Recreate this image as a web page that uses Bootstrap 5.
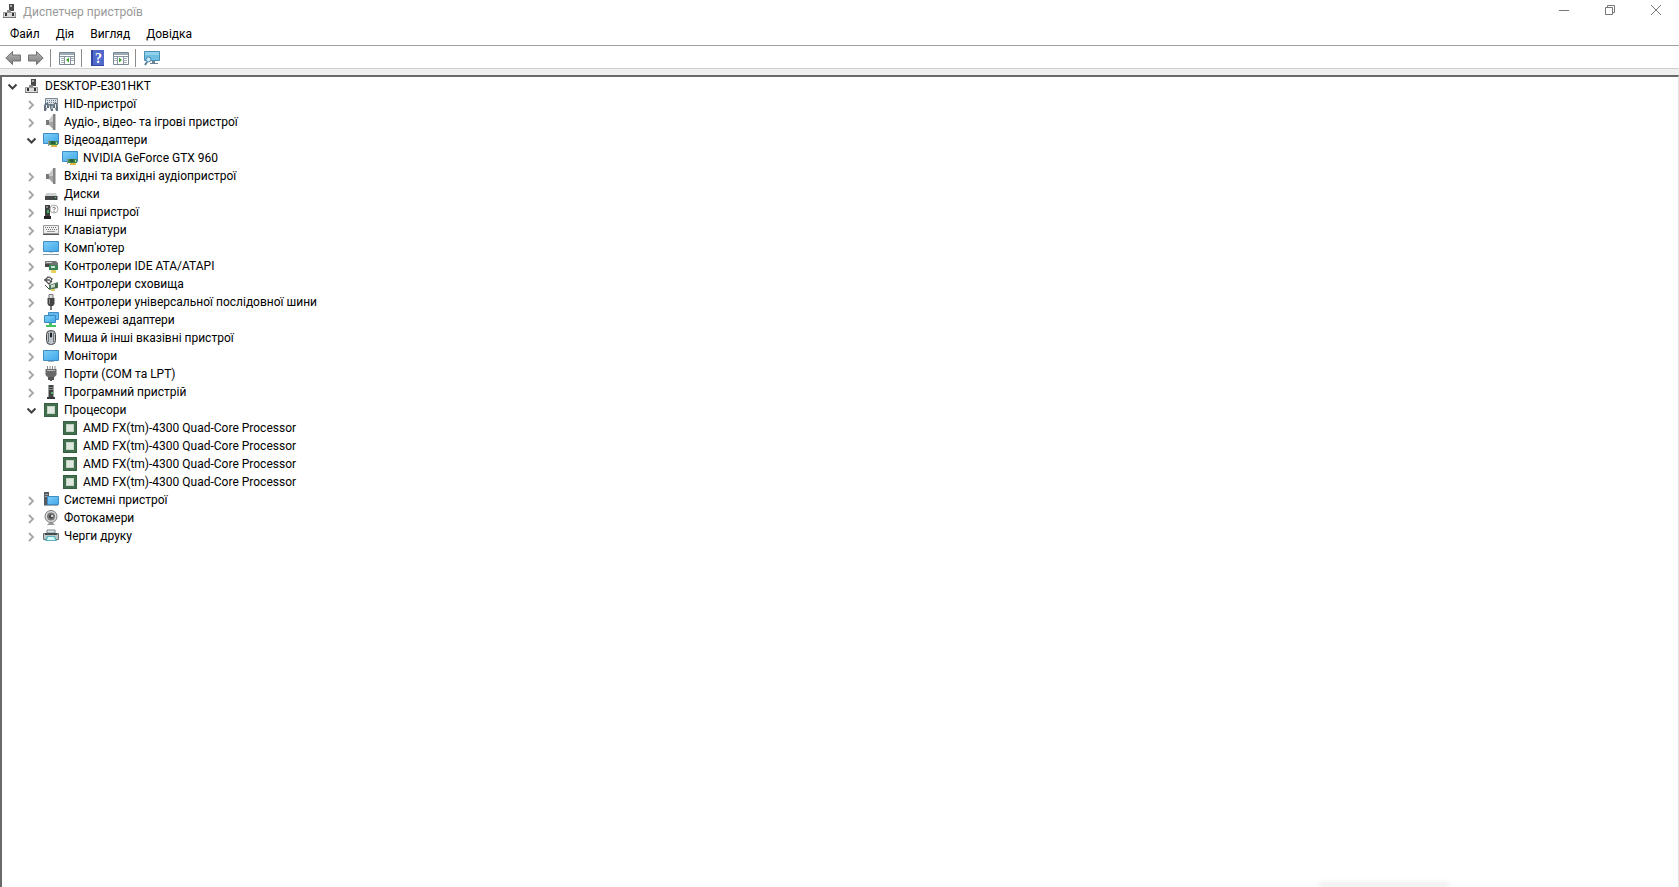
<!DOCTYPE html>
<html lang="uk">
<head>
<meta charset="utf-8">
<meta name="viewport" content="width=device-width, initial-scale=1">
<title>Диспетчер пристроїв</title>
<link href="https://cdn.jsdelivr.net/npm/bootstrap@5.3.0/dist/css/bootstrap.min.css" rel="stylesheet">
<style>
  body { font: 12px/18px Roboto, "Noto Sans", sans-serif; color: #000; background: #fff; }
  button { font: inherit; color: inherit; background: none; border: 0; padding: 0; }
  svg { display: block; flex: none; }
  .titlebar { height: 22px; padding-left: 2px; color: #999; }
  .titlebar h1 { font: inherit; margin: 2px 0 0 5px; }
  .win-btn { width: 46px; height: 20px; color: #777; }
  .menubar { height: 24px; padding: 1px 0 0 2px; border-bottom: 1px solid #a0a0a0; }
  .menubar button { padding: 0 8px; }
  .toolbar { height: 23px; padding: 2px 0 0 5px; border-bottom: 1px solid #cfcfcf; }
  .toolbar button + button { margin-left: 7px; }
  .tool-sep { width: 1px; height: 18px; margin: 0 8px 0 6px; background: #8c8c8c; }
  .band { height: 6px; background: #f0f0f0; }
  .pane { border: solid #696969; border-width: 2px 0 0 2px; border-right: 1px solid #e3e3e3; padding-left: 2px; }
  .tree ul { padding-left: 19px; }
  .node { height: 18px; white-space: nowrap; }
  .twist { width: 16px; height: 18px; margin-right: 4px; color: #a6a6a6; }
  .twist.open { color: #404040; }
  .node > svg { margin-right: 5px; }
  .peek { right: 230px; bottom: 0; width: 130px; height: 7px; background: linear-gradient(#fff0, #e6e6e6); filter: blur(2px); }
</style>
</head>
<body class="d-flex flex-column min-vh-100 overflow-hidden position-relative">

<svg width="0" height="0" class="position-absolute" aria-hidden="true">
  <defs>
    <linearGradient id="sky" x1="0" y1="0" x2="1" y2="1"><stop offset="0" stop-color="#7fd0f8"/><stop offset="1" stop-color="#3fa6ea"/></linearGradient>
    <linearGradient id="metal" x1="0" y1="0" x2="0" y2="1"><stop offset="0" stop-color="#b5b5b5"/><stop offset="1" stop-color="#7c7c7c"/></linearGradient>
    <symbol id="closed" viewBox="0 0 16 18"><path d="M6 6l4 4-4 4" fill="none" stroke="currentColor" stroke-width="1.800"/></symbol>
    <symbol id="opened" viewBox="0 0 16 18"><path d="M4.500 7.500l4 4 4-4" fill="none" stroke="currentColor" stroke-width="2"/></symbol>
    <symbol id="i-manager" viewBox="0 0 16 16">
      <path d="M7 1h5v7H7z" fill="#4a4a4a"/><path d="M8 2h2v2H8z" fill="#aaa"/><path d="M5 7h4v2H5z" fill="#888"/>
      <path d="M1.500 9.500h12v5h-12z" fill="#dadada" stroke="#999"/><path d="M3 10h2v3H3zM10 10h2v3h-2z" fill="#333"/><path d="M1 14h13v1H1z" fill="#777"/>
    </symbol>
    <symbol id="i-hid" viewBox="0 0 16 16">
      <path d="M2.500 2.500h12v6h-12z" fill="#dbe1e6" stroke="#7b8791"/><path d="M4 4.500h9M4 6.500h9" stroke="#6d7b86" stroke-dasharray="1 1"/>
      <path d="M1 15V10l1-3h3l1 3 1-2h2l1 2 1-3h3l1 3v5h-2l-1-3h-2v3H8l-1-3H4l-1 3z" fill="#63727e"/><path d="M3.500 9v3M12.500 8v4M9 10v3M6.500 10v2" stroke="#e4ecf1"/>
    </symbol>
    <symbol id="i-audio" viewBox="0 0 16 16">
      <path d="M3 6h3v5H3z" fill="#777"/><path d="M6 6l4-5v14l-4-4z" fill="#a5a5a5"/><path d="M10 0h2.500v16H10z" fill="#858585"/><path d="M6 6l4-5v7H6z" fill="#c9c9c9"/>
    </symbol>
    <symbol id="i-display" viewBox="0 0 16 16">
      <path d="M.5 1.500h15v10H.5z" fill="url(#sky)" stroke="#3f8dc4"/><path d="M6 9h9v4H6z" fill="#3f8a50"/><path d="M8 9h4v3H8z" fill="#2c6038"/><path d="M8 13h6v2H8z" fill="#dcb845"/><path d="M5 8h1v6H5z" fill="#999"/><path d="M13 10h1v2h-1z" fill="#b4dc9c"/>
    </symbol>
    <symbol id="i-disk" viewBox="0 0 16 16"><path d="M3 7h10l1 3H2z" fill="#d0d0d0"/><path d="M2 10h12.500v4H2z" fill="#454848"/><path d="M12 11h1v1h-1z" fill="#65d46e"/></symbol>
    <symbol id="i-other" viewBox="0 0 16 16">
      <path d="M2 1h5v12H2z" fill="#3b3f3d"/><path d="M3 2h2v2H3z" fill="#818784"/><path d="M4 6h2v3H4z" fill="#3fae58"/><path d="M1 12h7v3H1z" fill="#222"/>
      <circle cx="11" cy="5" r="4" fill="#fff" stroke="#aaa"/><path d="M9.500 4q1.500-2 3 0 0 1-1.500 1.500v1M11 7v1" fill="none" stroke="#777"/>
    </symbol>
    <symbol id="i-keyboard" viewBox="0 0 16 16"><path d="M.5 3.500h15v8H.5z" fill="#eee" stroke="#999"/><path d="M2 5.500h12M3 7.500h11" stroke="#777" stroke-dasharray="1 1"/><path d="M4 9.500h8" stroke="#999"/><path d="M0 12h16v1H0z" fill="#555"/></symbol>
    <symbol id="i-computer" viewBox="0 0 16 16"><path d="M.5 1.500h15v10H.5z" fill="url(#sky)" stroke="#3f8dc4"/><path d="M0 14.500h16" stroke="#8397a5"/><path d="M6 12h4v1H6z" fill="#ccd6dd"/></symbol>
    <symbol id="i-ide" viewBox="0 0 16 16"><path d="M2 3h11l2 2v3H2z" fill="#6f7474"/><path d="M2 6h5v3H2z" fill="#444"/><path d="M6 7h9v5H6z" fill="#3a8554"/><path d="M8 8h4v2H8z" fill="#d2e2d4"/><path d="M8 12h5v3H8z" fill="#e9d160"/><path d="M3 4h6v1H3z" fill="#c9d3ce"/></symbol>
    <symbol id="i-storage" viewBox="0 0 16 16"><path d="M8 2L5 1 2 4l4 4 3-3M1 4h6M6 1l3 2-2 3" fill="none" stroke="#555" stroke-width="1.300"/><path d="M6 9l9-3v6l-9 2z" fill="#4d7a57"/><path d="M8 9l4-1v3l-4 1z" fill="#cad8ca"/><path d="M2 9l4 4M13 8v4" stroke="#444"/><path d="M8 13h4v2H8z" fill="#e0c860"/></symbol>
    <symbol id="i-usb" viewBox="0 0 16 16"><path d="M6 .5h4v4H6z" fill="#ddd" stroke="#777"/><path d="M4.500 4h7v6l-1.500 2H6l-1.500-2z" fill="#444"/><path d="M7 12h2v4H7z" fill="#777"/><path d="M6 5h1v5H6z" fill="#8a8a8a"/></symbol>
    <symbol id="i-network" viewBox="0 0 16 16"><path d="M5.500.5h10v7h-10z" fill="#5fb8f0" stroke="#3f8dc4"/><path d="M1.500 3.500h11v7h-11z" fill="url(#sky)" stroke="#3a88c0"/><path d="M6 11h3v2h4v2H3v-2h3z" fill="#46c263"/></symbol>
    <symbol id="i-mouse" viewBox="0 0 16 16"><rect x="3.500" y=".5" width="9" height="14" rx="4" fill="#bcc3ca" stroke="#444"/><path d="M8 1v7M5.500 3v9M10.500 3v9" stroke="#6b737a"/><path d="M7 3h2v4H7z" fill="#222"/></symbol>
    <symbol id="i-monitor" viewBox="0 0 16 16"><path d="M.5 2.500h15v10H.5z" fill="url(#sky)" stroke="#3f8dc4"/><path d="M5 13h6v1H5z" fill="#a5b5c0"/></symbol>
    <symbol id="i-port" viewBox="0 0 16 16"><path d="M4.500 0v4M7 0v4M9.500 0v4M12 0v4" stroke="#888"/><path d="M2.500 3h11v6l-2 2h-7l-2-2z" fill="#686868"/><path d="M4 4h8v1H4z" fill="#bbb"/><path d="M5 11h2v3H5zM9 11h2v3H9zM7 11h2v4H7z" fill="#555"/></symbol>
    <symbol id="i-software" viewBox="0 0 16 16"><path d="M5.500 1h5v12h-5z" fill="#3e4242"/><path d="M6 3h4v1H6zM6 5h4v1H6z" fill="#808888"/><path d="M8 8h2v2H8z" fill="#53b269"/><path d="M4 13h8v2H4z" fill="#353838"/></symbol>
    <symbol id="i-cpu" viewBox="0 0 16 16"><path d="M1 1h14v14H1z" fill="#416f4d"/><path d="M1.500 1.500h13v13h-13z" fill="none" stroke="#2c5238" stroke-dasharray="1 1"/><path d="M4 4h8v8H4z" fill="#c5d3c5"/><path d="M5 5h6v6H5z" fill="#e0e9e0"/></symbol>
    <symbol id="i-system" viewBox="0 0 16 16"><path d="M1 0h5v13H1z" fill="#555c61"/><path d="M2 2h3v1H2zM2 4h3v1H2z" fill="#aaa"/><path d="M4.500 4.500h11v8h-11z" fill="url(#sky)" stroke="#3f8dc4"/><path d="M1 13h14v1H1z" fill="#9aaab4"/></symbol>
    <symbol id="i-camera" viewBox="0 0 16 16"><circle cx="8" cy="6.500" r="6" fill="#ddd" stroke="#777"/><circle cx="8" cy="6.500" r="3" fill="#444" stroke="#777" stroke-width="2"/><circle cx="9" cy="6" r="1" fill="#fff"/><path d="M6 13h4l2 2H4z" fill="#999"/></symbol>
    <symbol id="i-printer" viewBox="0 0 16 16"><path d="M4 2h8v3H4z" fill="#d9e8ea" stroke="#7a8588"/><path d="M.5 5.500h15v6H.5z" fill="#bfc6c8" stroke="#666e70"/><path d="M2 5h12v2H2z" fill="#444c4f"/><path d="M4 8h8l2 5H2z" fill="#58b6bc"/><path d="M5 9h6l1 3H4z" fill="#d9fafb"/></symbol>
    <symbol id="i-arrow" viewBox="0 0 16 16"><path d="M.8 8l6.700-6.500V5h8v6h-8v3.500z" fill="url(#metal)" stroke="#707070"/></symbol>
    <symbol id="i-pane" viewBox="0 0 16 16"><path d="M.5 2.500h15v12H.5z" fill="#fff" stroke="#7c8994"/><path d="M1 3h14v2H1z" fill="#9eacb8"/><path d="M1 6.500h14M5.500 6v8M11.500 6v8" stroke="#8795a2"/><path d="M2 8.500h3M2 10.500h3M2 12.500h3M12 8.500h3M12 10.500h3" stroke="#aab5be"/><path d="M10 7.500v5L7 10z" fill="#3fa02f"/></symbol>
  </defs>
</svg>

<header class="titlebar d-flex align-items-center">
  <svg width="16" height="16"><use href="#i-manager"/></svg>
  <h1>Диспетчер пристроїв</h1>
  <div class="ms-auto d-flex align-self-start">
    <button class="win-btn d-flex align-items-center justify-content-center" aria-label="Згорнути"><svg width="10" height="10"><path d="M0 5.500h10" stroke="currentColor"/></svg></button>
    <button class="win-btn d-flex align-items-center justify-content-center" aria-label="Відновити"><svg width="10" height="10"><path d="M.5 2.500h7v7h-7zM2.500 2V.5h7v7H8" fill="none" stroke="currentColor"/></svg></button>
    <button class="win-btn d-flex align-items-center justify-content-center" aria-label="Закрити"><svg width="10" height="10"><path d="M0 0l10 10M10 0L0 10" stroke="currentColor"/></svg></button>
  </div>
</header>

<nav class="menubar d-flex align-items-center" aria-label="Меню">
  <button>Файл</button><button>Дія</button><button>Вигляд</button><button>Довідка</button>
</nav>

<div class="toolbar d-flex align-items-center" role="toolbar" aria-label="Панель інструментів">
  <button aria-label="Назад"><svg width="16" height="16"><use href="#i-arrow"/></svg></button>
  <button aria-label="Вперед"><svg width="16" height="16" viewBox="0 0 16 16"><use href="#i-arrow" transform="matrix(-1 0 0 1 16 0)"/></svg></button>
  <span class="tool-sep"></span>
  <button aria-label="Дерево консолі"><svg width="16" height="16"><use href="#i-pane"/></svg></button>
  <span class="tool-sep"></span>
  <button aria-label="Довідка"><svg width="16" height="16" viewBox="0 0 16 16"><path d="M1 0h13v16H1z" fill="#3146a0"/><path d="M3 0h11v15H3z" fill="#5069cb"/><text x="8.500" y="13" font-size="14" font-weight="700" fill="#fff" text-anchor="middle" font-family="Liberation Serif, serif">?</text></svg></button>
  <button aria-label="Панель дій"><svg width="16" height="16" viewBox="0 0 16 16"><use href="#i-pane" transform="matrix(-1 0 0 1 16 0)"/></svg></button>
  <span class="tool-sep"></span>
  <button aria-label="Оновити конфігурацію"><svg width="16" height="16" viewBox="0 0 16 16"><path d="M.5 1.500h15v9H.5z" fill="#70bfe3" stroke="#4a8fb5"/><path d="M1 2h14v3H1z" fill="#8fd3ef"/><path d="M8 11h3v2h3v1H6v-1h2z" fill="#6d8494"/><circle cx="4.500" cy="9.500" r="2.500" fill="#c7e9f7" stroke="#4a87ab"/><path d="M3 12l-2 3" stroke="#5d7d90" stroke-width="2"/></svg></button>
</div>
<div class="band"></div>

<main class="pane flex-grow-1">
  <ul class="tree list-unstyled mb-0" id="tree"></ul>
</main>
<div class="peek position-absolute"></div>

<script>
  const cpu = ["cpu", "AMD FX(tm)-4300 Quad-Core Processor"];
  const data = ["manager", "DESKTOP-E301HKT", [
    ["hid", "HID-пристрої", []],
    ["audio", "Аудіо-, відео- та ігрові пристрої", []],
    ["display", "Відеоадаптери", [["display", "NVIDIA GeForce GTX 960"]]],
    ["audio", "Вхідні та вихідні аудіопристрої", []],
    ["disk", "Диски", []],
    ["other", "Інші пристрої", []],
    ["keyboard", "Клавіатури", []],
    ["computer", "Комп'ютер", []],
    ["ide", "Контролери IDE ATA/ATAPI", []],
    ["storage", "Контролери сховища", []],
    ["usb", "Контролери універсальної послідовної шини", []],
    ["network", "Мережеві адаптери", []],
    ["mouse", "Миша й інші вказівні пристрої", []],
    ["monitor", "Монітори", []],
    ["port", "Порти (COM та LPT)", []],
    ["software", "Програмний пристрій", []],
    ["cpu", "Процесори", [cpu, cpu, cpu, cpu]],
    ["system", "Системні пристрої", []],
    ["camera", "Фотокамери", []],
    ["printer", "Черги друку", []]
  ]];
  function render([icon, label, kids]) {
    const open = kids && kids.length > 0;
    const twist = kids
      ? `<button class="twist ${open ? "open" : ""}" aria-expanded="${open}" aria-label="${label}"><svg width="16" height="18"><use href="#${open ? "opened" : "closed"}"/></svg></button>`
      : `<span class="twist"></span>`;
    return `<li><div class="node d-flex align-items-center">${twist}<svg width="16" height="16"><use href="#i-${icon}"/></svg><span>${label}</span></div>` +
      (open ? `<ul class="list-unstyled">${kids.map(render).join("")}</ul>` : "") + `</li>`;
  }
  document.getElementById("tree").innerHTML = render(data);
</script>
<script src="https://cdn.jsdelivr.net/npm/bootstrap@5.3.0/dist/js/bootstrap.bundle.min.js"></script>
</body>
</html>
